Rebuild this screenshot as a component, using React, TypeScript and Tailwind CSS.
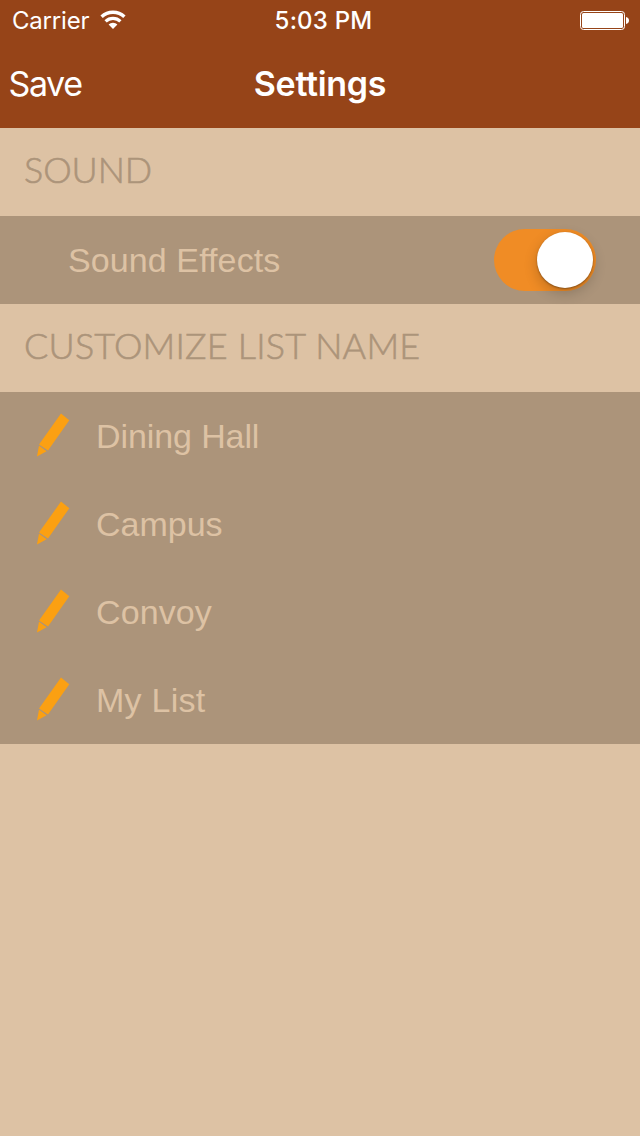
import { useState } from 'react';
import clsx from 'clsx';

const LIST_NAMES = [
  { name: 'Dining Hall', tracking: 'tracking-[-0.1px]' },
  { name: 'Campus', tracking: 'tracking-[0px]' },
  { name: 'Convoy', tracking: 'tracking-[0.1px]' },
  { name: 'My List', tracking: 'tracking-[0.25px]' },
];

function WifiIcon() {
  return (
    <svg width="26" height="20" viewBox="0 0 26 20" fill="none" className="mt-[10px] ml-[10.5px]">
      <path d="M1.6 6.8a16.4 16.4 0 0 1 22.8 0" stroke="white" strokeWidth="3.4" />
      <path d="M5.6 11.3a10.6 10.6 0 0 1 14.8 0" stroke="white" strokeWidth="3.2" />
      <path d="M13 19L8.6 14.6a6 6 0 0 1 8.8 0Z" fill="white" />
    </svg>
  );
}

function BatteryIcon() {
  return (
    <svg width="50" height="20" viewBox="0 0 50 20" className="mt-[11px] mr-[10px]">
      <rect x="0.5" y="0.5" width="44" height="18" rx="3" fill="none" stroke="white" />
      <rect x="2" y="2" width="41" height="15" rx="1.5" fill="white" />
      <path d="M46 6c2 0.5 3 1.8 3 3.5s-1 3-3 3.5Z" fill="white" />
    </svg>
  );
}

function PencilIcon() {
  return (
    <svg width="36" height="46" viewBox="0 0 36 46" fill="#fba012" className="mb-[2px] shrink-0">
      <path d="M26 1.6L34.3 8.3L13 38.5L4 32.4Z" />
      <path d="M4 33.7L11.6 39.2L2 44.5Z" />
    </svg>
  );
}

function Switch({ checked, onChange }: { checked: boolean; onChange: (value: boolean) => void }) {
  return (
    <button
      role="switch"
      aria-checked={checked}
      aria-label="Sound Effects"
      onClick={() => onChange(!checked)}
      className={clsx(
        'flex h-[62px] w-[102px] items-center rounded-full px-[3px]',
        checked ? 'justify-end bg-[#f08c25]' : 'justify-start bg-[#ddc2a4]'
      )}
    >
      <span className="size-14 rounded-full bg-white shadow-[0_5px_14px_rgba(0,0,0,0.2),0_1px_2px_rgba(0,0,0,0.35)]" />
    </button>
  );
}

function SectionHeader({ title, className }: { title: string; className: string }) {
  return (
    <h2 className="flex h-[88px] items-center pb-[6px] pl-6 font-['Lato',sans-serif] text-[36px] font-light text-[#ac947a] [-webkit-text-stroke:0.6px_#ac947a]">
      <span className={clsx('whitespace-nowrap', className)}>{title}</span>
    </h2>
  );
}

export default function App() {
  const [sound, setSound] = useState(true);

  return (
    <div className="min-h-[1136px] w-[640px] overflow-hidden bg-[#ddc2a4] font-['Liberation_Sans',sans-serif]">
      <header className="h-32 bg-[#964418] font-['Inter',sans-serif] text-white">
        <div className="grid h-10 grid-cols-3">
          <div className="flex">
            <span className="pt-[3px] pl-3 text-[24px] leading-9 tracking-[-0.2px]">Carrier</span>
            <WifiIcon />
          </div>
          <span className="pt-[3px] pl-[7px] text-center text-[24px] leading-9 font-medium tracking-[0.2px] whitespace-nowrap">5:03 PM</span>
          <div className="flex justify-end">
            <BatteryIcon />
          </div>
        </div>
        <div className="grid h-[88px] grid-cols-3 items-center">
          <button className="pl-[8.5px] text-left text-[34px] leading-[88px] tracking-[-1.4px]">Save</button>
          <h1 className="text-center text-[34px] leading-[88px] font-semibold tracking-[-0.3px]">Settings</h1>
        </div>
      </header>

      <SectionHeader title="SOUND" className="tracking-[-0.1px]" />
      <div className="flex h-[88px] items-center justify-between bg-[#ac947a] pr-11 pl-[68px]">
        <span className="text-[34px] tracking-[0.1px] text-[#ddc2a4]">Sound Effects</span>
        <Switch checked={sound} onChange={setSound} />
      </div>

      <SectionHeader title="CUSTOMIZE LIST NAME" className="tracking-[0.2px]" />
      <ul className="bg-[#ac947a]">
        {LIST_NAMES.map(({ name, tracking }) => (
          <li key={name} className="flex h-[88px] items-center pl-[35px]">
            <PencilIcon />
            <span className={clsx('pl-[25px] text-[34px] text-[#ddc2a4]', tracking)}>{name}</span>
          </li>
        ))}
      </ul>
    </div>
  );
}
